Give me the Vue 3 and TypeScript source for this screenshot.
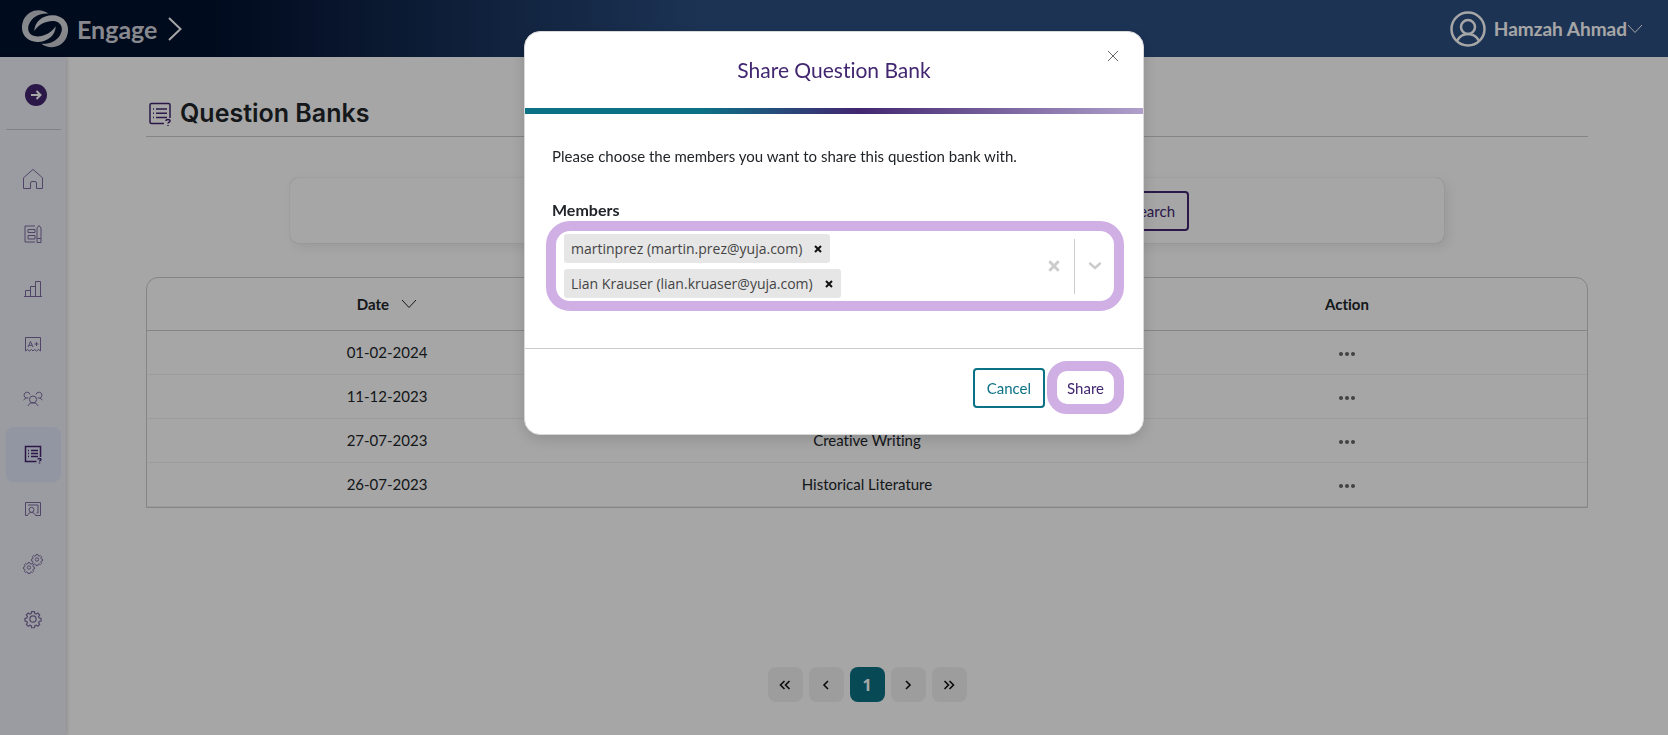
<script setup lang="ts">
import { ref } from 'vue'

interface Bank {
  date: string
  name: string
}

interface Member {
  id: number
  label: string
}

const banks = ref<Bank[]>([
  { date: '01-02-2024', name: '' },
  { date: '11-12-2023', name: '' },
  { date: '27-07-2023', name: 'Creative Writing' },
  { date: '26-07-2023', name: 'Historical Literature' },
])

const members = ref<Member[]>([
  { id: 1, label: 'martinprez (martin.prez@yuja.com)' },
  { id: 2, label: 'Lian Krauser (lian.kruaser@yuja.com)' },
])

const query = ref('')
const open = ref(true)

const gear = 'M10 1.5h4l.6 2.8 1.9.8 2.4-1.6 2.6 2.7-1.5 2.4.8 1.9 2.7.6v3.8l-2.7.6-.8 1.9 1.5 2.4-2.6 2.7-2.4-1.6-1.9.8-.6 2.8h-4l-.6-2.8-1.9-.8-2.4 1.6-2.6-2.7L4 17.4l-.8-1.9-2.7-.6v-3.8l2.7-.6L4 8.6 2.5 6.2l2.6-2.7L7.5 5.1l1.9-.8z'

function removeMember(id: number) {
  members.value = members.value.filter((m) => m.id !== id)
}
</script>

<template>
  <div class="app">
    <header class="topbar">
      <a href="#" class="brand">
        <svg class="logo" viewBox="64 24 144 120" aria-hidden="true">
          <defs>
            <linearGradient id="swoosh" x1="0" y1="0" x2="0" y2="1">
              <stop offset="0" stop-color="#c4c7ce" />
              <stop offset="1" stop-color="#dcdee2" />
            </linearGradient>
          </defs>
          <path fill="url(#swoosh)" d="M147 38C125 20 85 24 71 58C57 96 80 122 112 123C142 124 168 104 168 76C155 97 130 108 108 106C84 102 80 80 92 62C104 44 125 36 147 38Z" />
          <path fill="url(#swoosh)" transform="rotate(180 136 83)" d="M147 38C125 20 85 24 71 58C57 96 80 122 112 123C142 124 168 104 168 76C155 97 130 108 108 106C84 102 80 80 92 62C104 44 125 36 147 38Z" />
        </svg>
        <span class="brand-name">Engage</span>
        <svg class="brand-arrow" viewBox="0 0 14 24" aria-hidden="true"><path d="M1 1l11.500 11L1 23" /></svg>
      </a>
      <button class="user" type="button">
        <svg class="avatar" viewBox="0 0 36 36" aria-hidden="true">
          <circle cx="18" cy="18" r="16.500" />
          <circle cx="18" cy="16" r="7" />
          <path d="M7 30c2.500-5 6.500-7 11-7s8.500 2 11 7" />
        </svg>
        <span class="user-name">Hamzah Ahmad</span>
        <svg class="caret" viewBox="0 0 16 10" aria-hidden="true"><path d="M1 1l7 7.500L15 1" /></svg>
      </button>
    </header>

    <div class="body">
      <nav class="sidebar" aria-label="Main">
        <button class="expand" type="button" aria-label="Expand menu">
          <svg viewBox="0 0 22 22"><circle cx="11" cy="11" r="11" /><path d="M6 11h9.500M11.500 7l4 4-4 4" /></svg>
        </button>
        <div class="rule"></div>
        <a href="#" class="item" aria-label="Home">
          <svg viewBox="0 0 24 24"><path d="M2.500 21.500V10.800L12 2.400l9.500 8.400v10.700h-6v-5.500a1.500 1.500 0 0 0-1.500-1.500h-3a1.500 1.500 0 0 0-1.500 1.500v5.500z" /></svg>
        </a>
        <a href="#" class="item" aria-label="Content">
          <svg viewBox="0 0 24 24"><path d="M14 4H4v16h10M7 7.500h7v3H7zM7 13.500h7v3.500H7zM16 6l2-2.500L20 6v14.500h-4zM16 16.500h4" /></svg>
        </a>
        <a href="#" class="item" aria-label="Reports">
          <svg viewBox="0 0 24 24"><path d="M3 19.500h18M4.500 19.500v-6h5v6M9.500 19.500V9.500h5v10M14.500 19.500v-15h5v15" /></svg>
        </a>
        <a href="#" class="item" aria-label="Gradebook">
          <svg viewBox="0 0 24 24"><path d="M4.500 19V5.500h15V19l-2-1.500-2 1.500-2-1.500-1.500 1.500-1.500-1.500L8.500 19l-2-1.500zM7 15l2.500-5.500L12 15M8 13.300h3M13.500 12h4M15.500 10v4" /></svg>
        </a>
        <a href="#" class="item" aria-label="Groups">
          <svg viewBox="0 0 24 24"><circle cx="12" cy="12.500" r="3.500" /><path d="M7 19c.8-2.200 2.500-3.200 5-3.200s4.200 1 5 3.200M9 7.500A3 3 0 1 0 5 11L2.500 13M15 7.500A3 3 0 1 1 19 11l2.500 2M5 11h2.500M19 11h-2.500" /></svg>
        </a>
        <a href="#" class="item active" aria-label="Question banks" aria-current="page">
          <svg viewBox="0 0 24 24"><path d="M19.500 15V4.500h-15v15h11M7 8.500h1M10 8.500h7M7 11.500h1M10 11.500h7M7 14.500h1M10 14.500h7M17 17.500c0-1.500 3-1.500 3 0 0 1-1.500 1-1.500 2M18.500 20.500v1" /></svg>
        </a>
        <a href="#" class="item" aria-label="Classes">
          <svg viewBox="0 0 24 24"><path d="M6.500 18.500h-2v-13h15v13h-5M7 8h10v8h-1.500" /><circle cx="10.500" cy="12.800" r="2.500" /><path d="M6.500 18.500c.8-2.200 2-3 4-3s3.200.8 4 3" /></svg>
        </a>
        <a href="#" class="item" aria-label="Integrations">
          <svg viewBox="0 0 24 24">
            <g transform="translate(10.200 1.800) scale(.48)"><path stroke-width="2" :d="gear" /><circle cx="12" cy="12" r="3.500" stroke-width="2" /></g>
            <g transform="translate(2.200 9.800) scale(.48)"><path stroke-width="2" :d="gear" /><circle cx="12" cy="12" r="3.500" stroke-width="2" /></g>
          </svg>
        </a>
        <a href="#" class="item" aria-label="Settings">
          <svg viewBox="0 0 24 24"><g transform="translate(3.600 3.600) scale(.7)"><path stroke-width="1.700" :d="gear" /><circle cx="12" cy="12" r="4.500" stroke-width="1.700" /></g></svg>
        </a>
      </nav>

      <main class="main">
        <h1 class="title">
          <svg viewBox="0 0 24 24" aria-hidden="true"><path d="M22 16V3a1.500 1.500 0 0 0-1.500-1.500h-17A1.500 1.500 0 0 0 2 3v17a1.500 1.500 0 0 0 1.500 1.500H16M5 7h1M8 7h11M5 11.300h1M8 11.300h11M5 15.500h1M8 15.500h11M18 19c0-2 4-2 4 0 0 1.300-2 1.200-2 2.500M20 23v1" /></svg>
          Question Banks
        </h1>

        <form class="search-panel" @submit.prevent>
          <div class="search-inner">
            <input v-model="query" class="search-input" type="text" aria-label="Search question banks" />
            <button class="search-btn" type="submit">Search</button>
          </div>
        </form>

        <div class="table-frame">
          <table>
            <thead>
              <tr>
                <th scope="col">
                  <button class="sort" type="button">Date
                    <svg class="caret" viewBox="0 0 16 10" aria-hidden="true"><path d="M1 1l7 7.500L15 1" /></svg>
                  </button>
                </th>
                <th scope="col">Name</th>
                <th scope="col">Action</th>
              </tr>
            </thead>
            <tbody>
              <tr v-for="bank in banks" :key="bank.date">
                <td>{{ bank.date }}</td>
                <td>{{ bank.name }}</td>
                <td>
                  <button class="more" type="button" aria-label="More actions">
                    <svg viewBox="0 0 16 4"><circle cx="2" cy="2" r="2" /><circle cx="8" cy="2" r="2" /><circle cx="14" cy="2" r="2" /></svg>
                  </button>
                </td>
              </tr>
            </tbody>
          </table>
        </div>

        <nav class="pager" aria-label="Pagination">
          <button type="button" aria-label="First page"><svg viewBox="0 0 12 10"><path d="M5.500 1l-4 4 4 4M10.500 1l-4 4 4 4" /></svg></button>
          <button type="button" aria-label="Previous page"><svg viewBox="0 0 12 10"><path d="M8 1L4 5l4 4" /></svg></button>
          <button type="button" class="current" aria-current="page">1</button>
          <button type="button" aria-label="Next page"><svg viewBox="0 0 12 10"><path d="M4 1l4 4-4 4" /></svg></button>
          <button type="button" aria-label="Last page"><svg viewBox="0 0 12 10"><path d="M1.500 1l4 4-4 4M6.500 1l4 4-4 4" /></svg></button>
        </nav>
      </main>
    </div>

    <div v-if="open" class="backdrop">
      <section class="modal" role="dialog" aria-modal="true" aria-labelledby="share-title">
        <header class="modal-head">
          <h2 id="share-title">Share Question Bank</h2>
          <button class="close" type="button" aria-label="Close" @click="open = false">
            <svg viewBox="0 0 12 12"><path d="M1 1l10 10M11 1L1 11" /></svg>
          </button>
        </header>
        <div class="stripe"></div>
        <div class="modal-body">
          <p>Please choose the members you want to share this question bank with.</p>
          <label for="members">Members</label>
          <div class="select">
            <ul class="chips">
              <li v-for="m in members" :key="m.id">
                <span>{{ m.label }}</span>
                <button type="button" :aria-label="'Remove ' + m.label" @click="removeMember(m.id)">
                  <svg viewBox="0 0 8 8"><path d="M1 1l6 6M7 1L1 7" /></svg>
                </button>
              </li>
              <li class="entry"><input id="members" type="text" /></li>
            </ul>
            <button class="clear" type="button" aria-label="Clear all" @click="members = []">
              <svg viewBox="0 0 12 12"><path d="M2 2l8 8M10 2l-8 8" /></svg>
            </button>
            <span class="bar"></span>
            <button class="toggle" type="button" aria-label="Show members">
              <svg viewBox="0 0 14 10"><path d="M2 2.500l5 4.500 5-4.500" /></svg>
            </button>
          </div>
        </div>
        <footer class="modal-foot">
          <button class="cancel" type="button" @click="open = false">Cancel</button>
          <button class="share" type="button">Share</button>
        </footer>
      </section>
    </div>
  </div>
</template>

<style>
body {
  margin: 0;
}
</style>

<style scoped>
* {
  box-sizing: border-box;
}

.app {
  display: flex;
  flex-direction: column;
  min-height: 100vh;
  background: #fff;
  color: #212529;
  font: 15px/24px Lato, "Open Sans", sans-serif;
  font-variant-ligatures: none;
}

button {
  margin: 0;
  padding: 0;
  border: 0;
  background: none;
  color: inherit;
  font: inherit;
  font-variant-ligatures: none;
  cursor: pointer;
}

svg {
  display: block;
  fill: none;
  stroke: currentColor;
}

.topbar {
  display: flex;
  align-items: center;
  justify-content: space-between;
  height: 57px;
  padding: 0 25px 0 21px;
  background: linear-gradient(90deg, #03112f 13%, #2b4f82 42%);
  color: #fff;
}

.brand {
  display: flex;
  align-items: center;
  color: #d0d3da;
  text-decoration: none;
}

.logo {
  width: 48px;
  height: 40px;
  stroke: none;
}

.brand-name {
  margin-left: 8px;
  font-size: 25px;
  font-weight: 700;
}

.brand-arrow {
  width: 14px;
  height: 24px;
  margin-left: 11px;
  color: #fff;
  stroke-width: 2;
}

.user {
  display: flex;
  align-items: center;
}

.avatar {
  width: 36px;
  height: 36px;
  margin-right: 8px;
  stroke-width: 2.500;
}

.user-name {
  font-size: 19px;
  font-weight: 700;
}

.caret {
  width: 16px;
  height: 10px;
}

.body {
  display: flex;
  flex: 1;
}

.sidebar {
  display: flex;
  flex-direction: column;
  flex: none;
  width: 66px;
  padding: 27px 5px 0 6px;
  background: #eef0f8;
  box-shadow: 0 0 4px rgba(0, 0, 0, .25);
  color: #7d6a9f;
}

.expand {
  align-self: center;
  margin-left: 5px;
}

.expand svg {
  width: 22px;
  height: 22px;
  stroke: #fff;
  stroke-width: 2;
}

.expand circle {
  fill: #422670;
  stroke: none;
}

.rule {
  height: 1px;
  margin: 23px 0 22px;
  background: #c8c8cc;
}

.item {
  display: flex;
  align-items: center;
  justify-content: center;
  height: 55px;
  padding: 0 2px 2px 0;
  border-radius: 8px;
  color: inherit;
}

.item svg {
  width: 24px;
  height: 24px;
}

.item.active {
  background: #e1e5f9;
  color: #422670;
}

.item.active svg {
  stroke-width: 1.500;
}

.main {
  display: flex;
  flex: 1;
  flex-direction: column;
  min-width: 0;
  padding: 37px 80px 33px;
}

.title {
  display: flex;
  align-items: center;
  gap: 8px;
  margin: 0;
  padding-bottom: 3px;
  border-bottom: 1px solid #ccc;
  font: 600 25px/39px Inter, sans-serif;
}

.title svg {
  width: 24px;
  height: 24px;
  margin-left: 2px;
  color: #422670;
  stroke-width: 1.500;
}

.search-panel {
  display: flex;
  justify-content: center;
  width: 80%;
  margin: 41px auto 34px;
  padding: 13px 24px 12px;
  border-radius: 8px;
  box-shadow: 0 0 1px rgba(0, 0, 0, .3), 4px 4px 12px rgba(0, 0, 0, .08);
}

.search-inner {
  display: flex;
  gap: 16px;
  width: 644px;
}

.search-input {
  flex: 1;
  min-width: 0;
  border: 1px solid #ccc;
  border-radius: 4px;
  padding: 0 12px;
}

.search-btn {
  height: 40px;
  padding: 0 12px;
  border: 2px solid #422670;
  border-radius: 4px;
  color: #422670;
}

.table-frame {
  overflow: hidden;
  border: 1px solid #ccc;
  border-radius: 12px 12px 0 0;
}

table {
  width: 100%;
  border-collapse: collapse;
  table-layout: fixed;
}

th {
  height: 52px;
  padding: 0;
  border-bottom: 1px solid #ccc;
  font-weight: 700;
}

td {
  height: 44px;
  padding: 0;
  border-bottom: 1px solid #f0f0f0;
  text-align: center;
}

.sort {
  display: inline-flex;
  align-items: center;
  gap: 12px;
}

.more {
  padding: 8px;
  vertical-align: middle;
  color: #666;
}

.more svg {
  width: 16px;
  height: 4px;
  fill: currentColor;
  stroke: none;
}

.pager {
  display: flex;
  justify-content: center;
  gap: 6px;
  margin-top: auto;
}

.pager button {
  display: flex;
  align-items: center;
  justify-content: center;
  width: 35px;
  height: 35px;
  border-radius: 8px;
  background: #f2f2f2;
  color: #111;
}

.pager svg {
  width: 12px;
  height: 10px;
  stroke-width: 1.600;
}

.pager .current {
  background: #0b7285;
  color: #fff;
  font: 700 16px/24px "Open Sans", sans-serif;
}

.backdrop {
  position: fixed;
  inset: 0;
  display: flex;
  align-items: flex-start;
  justify-content: center;
  padding: 31px 16px;
  background: rgba(0, 0, 0, .35);
}

.modal {
  width: 620px;
  max-width: 100%;
  overflow: hidden;
  border: 1px solid #d8d8d8;
  border-radius: 16px;
  background: #fff;
  box-shadow: 0 4px 16px rgba(0, 0, 0, .15);
}

.modal-head {
  display: grid;
  grid-template-columns: 1fr auto 1fr;
  height: 76px;
  padding: 18px 24px;
}

.modal-head h2 {
  grid-column: 2;
  align-self: center;
  margin: 0;
  color: #422670;
  font-size: 21px;
  font-weight: 400;
}

.close {
  justify-self: end;
  align-self: start;
  color: #666;
}

.close svg {
  width: 12px;
  height: 12px;
}

.stripe {
  height: 6px;
  background: linear-gradient(90deg, #0b7285 28%, #422670 54%, #b0a0cb);
}

.modal-body {
  padding: 30px 19px 37px 21px;
}

.modal-body p {
  margin: 0 0 31px;
  padding-left: 6px;
}

.modal-body label {
  display: block;
  padding-left: 6px;
  font-size: 16px;
  line-height: 22px;
  font-weight: 700;
}

.select {
  display: flex;
  align-items: center;
  padding: 3px 12px 3px 8px;
  border: 10px solid #d0afe4;
  border-radius: 24px;
}

.chips {
  display: flex;
  flex: 1;
  flex-direction: column;
  align-items: flex-start;
  gap: 6px;
  position: relative;
  margin: 0;
  padding: 0;
  list-style: none;
}

.chips li {
  display: flex;
  align-items: center;
  gap: 12px;
  height: 29px;
  padding: 0 8px 0 7px;
  border-radius: 3px;
  background: #e6e6e6;
  color: #444;
  font: 14px/29px "Open Sans", sans-serif;
}

.chips li.entry {
  position: absolute;
  right: 0;
  bottom: 0;
  padding: 0;
  background: none;
}

.entry input {
  width: 120px;
  border: 0;
  outline: 0;
  background: none;
}

.chips svg {
  width: 8px;
  height: 8px;
  color: #111;
  stroke-width: 2;
}

.clear,
.toggle {
  color: #ccc;
}

.clear svg {
  width: 14px;
  height: 14px;
  stroke-width: 2.500;
}

.toggle svg {
  width: 14px;
  height: 10px;
  stroke-width: 2.500;
  stroke-linecap: round;
}

.bar {
  align-self: stretch;
  width: 1px;
  margin: 5px 13px 4px;
  background: #ccc;
}

.modal-foot {
  display: flex;
  align-items: center;
  justify-content: flex-end;
  gap: 2px;
  padding: 12px 19px 20px;
  border-top: 1px solid #ccc;
}

.cancel {
  height: 40px;
  padding: 0 12px;
  border: 2px solid #0b7285;
  border-radius: 4px;
  color: #0b7285;
}

.share {
  height: 53px;
  padding: 0 10px;
  border: 10px solid #d0afe4;
  border-radius: 20px;
  color: #422670;
}
</style>
